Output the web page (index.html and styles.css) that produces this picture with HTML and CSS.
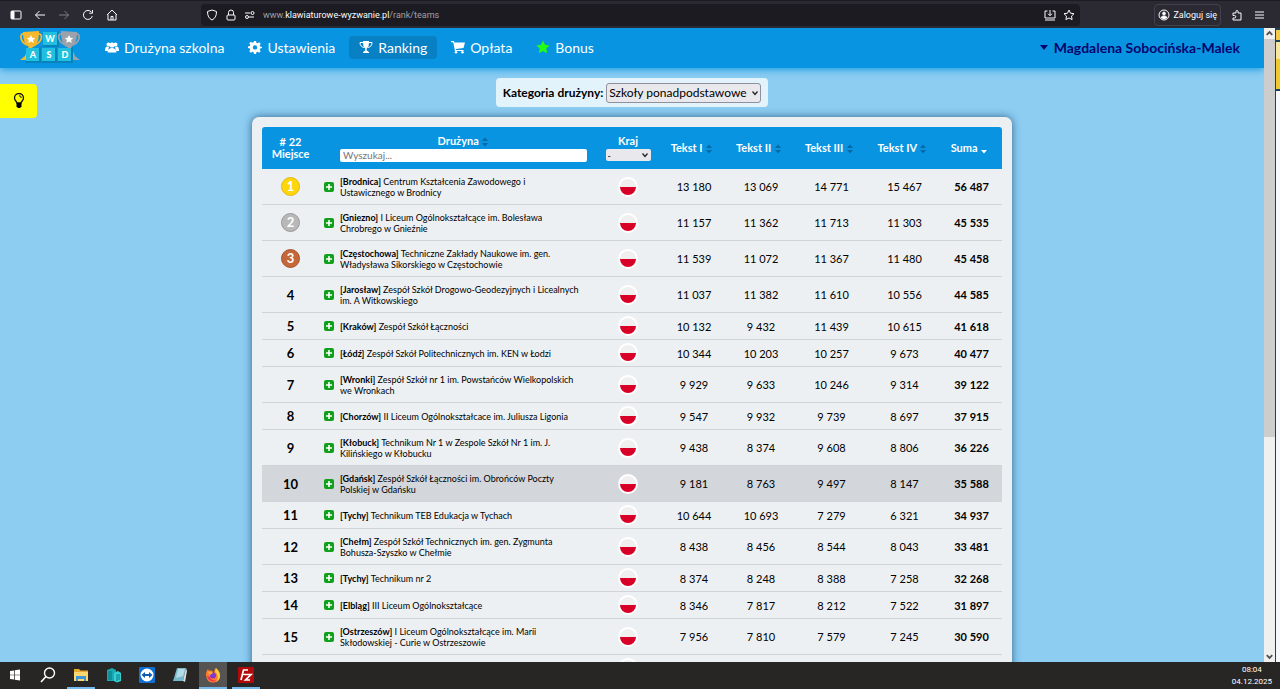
FILE: index.html
```html
<!DOCTYPE html>
<html lang="pl">
<head>
    <meta charset="UTF-8">
    <meta name="viewport" content="width=device-width, initial-scale=1.0">
    <title>Ranking drużyn</title>
    <link rel="stylesheet" href="styles.css">
</head>
<body>
    <svg width="0" height="0" class="sprites" aria-hidden="true">
        <symbol id="plus" viewBox="0 0 10 10"><rect width="10" height="10" rx="2" fill="#12a01c"/><path d="M5 2v6M2 5h6" stroke="#fff" stroke-width="1.6"/></symbol>
        <symbol id="sort" viewBox="0 0 8 10"><path d="M1 4l3-3.500L7 4zM1 6l3 3.500L7 6z" fill="#0668a5"/></symbol>
        <symbol id="chevron" viewBox="0 0 8 8"><path d="M1.500 2.500L4 5.500l2.500-3" fill="none" stroke="#222" stroke-width="1.300"/></symbol>
        <symbol id="star" viewBox="0 0 14 14"><path d="M7 .5l2 4.300 4.700.6-3.500 3.200.9 4.700L7 11l-4.100 2.300.9-4.700L.3 5.400 5 4.800z"/></symbol>
        <symbol id="cup" viewBox="0 0 24 34">
            <path d="M5 4C0 3 1 12 8 15M19 4c6-1 4 9-4 11" fill="none" stroke="currentColor" stroke-width="1.800"/>
            <path d="M4 2l16-1c0 9-2 15-6 16l-4 0C6 15 4 10 4 2z" fill="currentColor"/>
            <path d="M10 16h4l-4 10 2 4H1l5-4z" fill="currentColor"/>
            <path d="M12 5l1.300 2.700 3 .4-2.200 2 .6 3L12 11.600 9.300 13.100l.6-3-2.200-2 3-.4z" fill="#fff"/>
        </symbol>
    </svg>

    <div class="browser-bar">
        <div class="browser-nav">
            <button type="button" aria-label="Panel boczny"><svg viewBox="0 0 12 12"><rect x="1" y="2" width="10" height="8" rx="1"/><path d="M1.500 2.500h2.500v7H1.500z" fill="#fbfbfe"/></svg></button>
            <button type="button" aria-label="Wstecz"><svg viewBox="0 0 12 12"><path d="M11 6H1.500M5.500 2l-4 4 4 4"/></svg></button>
            <button type="button" aria-label="Dalej" class="off"><svg viewBox="0 0 12 12"><path d="M1 6h9.500M6.500 2l4 4-4 4"/></svg></button>
            <button type="button" aria-label="Odśwież"><svg viewBox="0 0 12 12"><path d="M10.300 7A4.500 4.500 0 1 1 9.500 3.200M10.500 1v3.200H7.300"/></svg></button>
            <button type="button" aria-label="Strona główna"><svg viewBox="0 0 12 12"><path d="M1 6l5-5 5 5M2 5.500V11h8V5.500M5 11V7.500h2V11"/></svg></button>
        </div>
        <div class="url-bar">
            <svg viewBox="0 0 12 12"><path d="M6 1l4.500 1.500C10.500 7 9 9.500 6 11 3 9.500 1.500 7 1.500 2.500z"/></svg>
            <svg viewBox="0 0 12 12"><rect x="2" y="6" width="8" height="5" rx="1"/><path d="M3.500 6V3.500a2.500 2.500 0 0 1 5 0V6"/></svg>
            <svg viewBox="0 0 12 12"><path d="M1 4h5M10 8H5"/><circle cx="8.500" cy="4" r="1.500"/><circle cx="3" cy="8" r="1.500"/></svg>
            <span class="url">www.<b>klawiaturowe-wyzwanie.pl</b>/rank/teams</span>
            <svg viewBox="0 0 12 12"><path d="M3.500 2H1v7h10V2H8.500M6 1v5.500M4 4.700l2 2 2-2M1 11h10"/></svg>
            <svg viewBox="0 0 12 12"><path d="M6 1l1.500 3.200 3.500.5-2.500 2.400.6 3.500L6 9l-3.100 1.600.6-3.500L1 4.700l3.500-.5z"/></svg>
        </div>
        <div class="browser-tools">
            <button type="button" class="login"><svg viewBox="0 0 12 12"><circle cx="6" cy="6" r="5"/><circle cx="6" cy="4.500" r="1.400" fill="#fbfbfe"/><path d="M3 8.500c1-2 5-2 6 0-1 1.500-5 1.500-6 0z" fill="#fbfbfe"/></svg>Zaloguj się</button>
            <button type="button" aria-label="Rozszerzenia"><svg viewBox="0 0 12 12"><path d="M2 4h3V2.500a1 1 0 0 1 2 0V4h3v7H2V9h1.500a1.200 1.200 0 0 0 0-2.500H2z"/></svg></button>
            <button type="button" aria-label="Menu"><svg viewBox="0 0 12 12"><path d="M2 3h9M2 6h9M2 9h9"/></svg></button>
        </div>
    </div>

    <div class="viewport">
        <div class="page">
            <header class="header">
                <a href="#" class="logo" aria-label="Strona główna">
                    <svg viewBox="0 0 62 34" width="62" height="34">
                        <path d="M24 2h14v13H24z" fill="#21bfe0"/>
                        <path d="M38 2l2-1v16H23l1-2h14z" fill="#0783ba"/>
                        <use href="#cup" x="0" y="0" width="24" height="34" color="#f5b82e"/>
                        <g color="#9ba2aa" transform="translate(62 0) scale(-1 1)"><use href="#cup" x="0" y="0" width="24" height="34"/></g>
                        <path d="M7 18h13v13H7zM23 18h13v13H23zM39 18h13v13H39z" fill="#21bfe0"/>
                        <path d="M20 18l2-1v16H6l1-2h13zM36 18l2-1v16H22l1-2h13zM52 18l2-1v16H38l1-2h13z" fill="#0783ba"/>
                        <g fill="#fff" font-family="Lato, sans-serif" font-size="9" font-weight="900" text-anchor="middle"><text x="31" y="12">W</text><text x="14" y="28">A</text><text x="30" y="28">S</text><text x="46" y="28">D</text></g>
                    </svg>
                </a>
                <nav class="menu">
                    <a href="#"><svg viewBox="0 0 14 14"><circle cx="3.500" cy="4.500" r="2"/><circle cx="10.500" cy="4.500" r="2"/><path d="M0 11c0-5 2-5 4-4L3 11zM14 11c0-5-2-5-4-4l1 4z"/><path d="M2.500 12.500c0-6 9-6 9 0z"/><circle cx="7" cy="5" r="2.600"/></svg>Drużyna szkolna</a>
                    <a href="#"><svg viewBox="0 0 14 14"><path fill-rule="evenodd" d="M6 1h2l.4 1.800 1.200.5 1.600-1 1.500 1.500-1 1.600.5 1.200L14 7v1l-1.800.4-.5 1.200 1 1.600-1.500 1.500-1.600-1-1.200.5L8 14H6l-.4-1.800-1.200-.5-1.600 1-1.500-1.500 1-1.600-.5-1.200L0 8V6.500l1.800-.4.5-1.200-1-1.600 1.500-1.500 1.600 1 1.200-.5zM7 5.200a2.200 2.200 0 1 0 0 4.400 2.200 2.200 0 0 0 0-4.400z"/></svg>Ustawienia</a>
                    <a href="#" class="active"><svg viewBox="0 0 14 14"><path d="M4 1h6c0 4-.5 6.500-2.300 7.500v2L10 12v1H4v-1l2.300-1.500v-2C4.500 7.500 4 5 4 1z"/><path d="M4 2.500H1c0 3 1.500 4.500 4 5M10 2.500h3c0 3-1.500 4.500-4 5" fill="none" stroke="#fff"/></svg>Ranking</a>
                    <a href="#"><svg viewBox="0 0 14 14"><path d="M0 1h3l.4 1.500H14L12.500 8 5 9v1h7.500v1H4L2.200 2.300H0z"/><circle cx="5" cy="12.300" r="1.300"/><circle cx="11.500" cy="12.300" r="1.300"/></svg>Opłata</a>
                    <a href="#" class="bonus"><svg viewBox="0 0 14 14"><use href="#star"/></svg>Bonus</a>
                </nav>
                <a href="#" class="user"><svg viewBox="0 0 8 5" width="8" height="5"><path d="M0 0h8L4 5z"/></svg>Magdalena Sobocińska-Malek</a>
            </header>

            <button type="button" class="hint" aria-label="Podpowiedź"><svg viewBox="0 0 12 16" width="12" height="16"><path d="M4 10C3.500 8 1.500 7.500 1.500 5a4.500 4.500 0 0 1 9 0c0 2.500-2 3-2.500 5z" fill="none" stroke="#111" stroke-width="1.300"/><path d="M6 2.800a2 2 0 0 1 2.200 2.200" fill="none" stroke="#111"/><path d="M3.500 10h5v3.500L7 15H5l-1.500-1.500z"/></svg></button>

            <main class="container">
                <div class="category">
                    <label for="category">Kategoria drużyny:</label>
                    <span class="select">
                        <select id="category"><option>Szkoły ponadpodstawowe</option></select>
                        <svg><use href="#chevron"/></svg>
                    </span>
                </div>

                <div class="card">
                    <table class="rank">
                        <colgroup>
                            <col class="c-place"><col class="c-plus"><col class="c-team"><col class="c-country"><col class="c-t1"><col class="c-t2"><col class="c-t3"><col class="c-t3"><col class="c-sum">
                        </colgroup>
                        <thead>
                            <tr>
                                <th># 22<br>Miejsce</th>
                                <th></th>
                                <th class="team-head">
                                    <label for="search">Drużyna <svg class="sort"><use href="#sort"/></svg></label>
                                    <input type="text" id="search" placeholder="Wyszukaj...">
                                </th>
                                <th>
                                    <label for="country">Kraj</label>
                                    <span class="select small">
                                        <select id="country"><option>-</option></select>
                                        <svg><use href="#chevron"/></svg>
                                    </span>
                                </th>
                                <th class="text-head">Tekst I <svg class="sort"><use href="#sort"/></svg></th>
                                <th class="text-head">Tekst II <svg class="sort"><use href="#sort"/></svg></th>
                                <th class="text-head">Tekst III <svg class="sort"><use href="#sort"/></svg></th>
                                <th class="text-head">Tekst IV <svg class="sort"><use href="#sort"/></svg></th>
                                <th class="text-head">Suma <svg class="sort" viewBox="0 0 8 10"><path d="M1 6h6L4 9.500z" fill="#fff"/></svg></th>
                            </tr>
                        </thead>
                        <tbody>
                            <tr class="tall"><td><span class="medal gold">1</span></td><td><svg class="plus"><use href="#plus"/></svg></td><td class="team"><b>[Brodnica]</b> Centrum Kształcenia Zawodowego i<br>Ustawicznego w Brodnicy</td><td><span class="flag"></span></td><td>13 180</td><td>13 069</td><td>14 771</td><td>15 467</td><td class="sum">56 487</td></tr>
                            <tr class="tall"><td><span class="medal silver">2</span></td><td><svg class="plus"><use href="#plus"/></svg></td><td class="team"><b>[Gniezno]</b> I Liceum Ogólnokształcące im. Bolesława<br>Chrobrego w Gnieźnie</td><td><span class="flag"></span></td><td>11 157</td><td>11 362</td><td>11 713</td><td>11 303</td><td class="sum">45 535</td></tr>
                            <tr class="tall"><td><span class="medal bronze">3</span></td><td><svg class="plus"><use href="#plus"/></svg></td><td class="team"><b>[Częstochowa]</b> Techniczne Zakłady Naukowe im. gen.<br>Władysława Sikorskiego w Częstochowie</td><td><span class="flag"></span></td><td>11 539</td><td>11 072</td><td>11 367</td><td>11 480</td><td class="sum">45 458</td></tr>
                            <tr class="tall"><td class="place">4</td><td><svg class="plus"><use href="#plus"/></svg></td><td class="team"><b>[Jarosław]</b> Zespół Szkół Drogowo-Geodezyjnych i Licealnych<br>im. A Witkowskiego</td><td><span class="flag"></span></td><td>11 037</td><td>11 382</td><td>11 610</td><td>10 556</td><td class="sum">44 585</td></tr>
                            <tr><td class="place">5</td><td><svg class="plus"><use href="#plus"/></svg></td><td class="team"><b>[Kraków]</b> Zespół Szkół Łączności</td><td><span class="flag"></span></td><td>10 132</td><td>9 432</td><td>11 439</td><td>10 615</td><td class="sum">41 618</td></tr>
                            <tr><td class="place">6</td><td><svg class="plus"><use href="#plus"/></svg></td><td class="team"><b>[Łódź]</b> Zespół Szkół Politechnicznych im. KEN w Łodzi</td><td><span class="flag"></span></td><td>10 344</td><td>10 203</td><td>10 257</td><td>9 673</td><td class="sum">40 477</td></tr>
                            <tr class="tall"><td class="place">7</td><td><svg class="plus"><use href="#plus"/></svg></td><td class="team"><b>[Wronki]</b> Zespół Szkół nr 1 im. Powstańców Wielkopolskich<br>we Wronkach</td><td><span class="flag"></span></td><td>9 929</td><td>9 633</td><td>10 246</td><td>9 314</td><td class="sum">39 122</td></tr>
                            <tr><td class="place">8</td><td><svg class="plus"><use href="#plus"/></svg></td><td class="team"><b>[Chorzów]</b> II Liceum Ogólnokształcace im. Juliusza Ligonia</td><td><span class="flag"></span></td><td>9 547</td><td>9 932</td><td>9 739</td><td>8 697</td><td class="sum">37 915</td></tr>
                            <tr class="tall"><td class="place">9</td><td><svg class="plus"><use href="#plus"/></svg></td><td class="team"><b>[Kłobuck]</b> Technikum Nr 1 w Zespole Szkół Nr 1 im. J.<br>Kilińskiego w Kłobucku</td><td><span class="flag"></span></td><td>9 438</td><td>8 374</td><td>9 608</td><td>8 806</td><td class="sum">36 226</td></tr>
                            <tr class="tall own"><td class="place">10</td><td><svg class="plus"><use href="#plus"/></svg></td><td class="team"><b>[Gdańsk]</b> Zespół Szkół Łączności im. Obrońców Poczty<br>Polskiej w Gdańsku</td><td><span class="flag"></span></td><td>9 181</td><td>8 763</td><td>9 497</td><td>8 147</td><td class="sum">35 588</td></tr>
                            <tr><td class="place">11</td><td><svg class="plus"><use href="#plus"/></svg></td><td class="team"><b>[Tychy]</b> Technikum TEB Edukacja w Tychach</td><td><span class="flag"></span></td><td>10 644</td><td>10 693</td><td>7 279</td><td>6 321</td><td class="sum">34 937</td></tr>
                            <tr class="tall"><td class="place">12</td><td><svg class="plus"><use href="#plus"/></svg></td><td class="team"><b>[Chełm]</b> Zespół Szkół Technicznych im. gen. Zygmunta<br>Bohusza-Szyszko w Chełmie</td><td><span class="flag"></span></td><td>8 438</td><td>8 456</td><td>8 544</td><td>8 043</td><td class="sum">33 481</td></tr>
                            <tr><td class="place">13</td><td><svg class="plus"><use href="#plus"/></svg></td><td class="team"><b>[Tychy]</b> Technikum nr 2</td><td><span class="flag"></span></td><td>8 374</td><td>8 248</td><td>8 388</td><td>7 258</td><td class="sum">32 268</td></tr>
                            <tr><td class="place">14</td><td><svg class="plus"><use href="#plus"/></svg></td><td class="team"><b>[Elbląg]</b> III Liceum Ogólnokształcące</td><td><span class="flag"></span></td><td>8 346</td><td>7 817</td><td>8 212</td><td>7 522</td><td class="sum">31 897</td></tr>
                            <tr class="tall"><td class="place">15</td><td><svg class="plus"><use href="#plus"/></svg></td><td class="team"><b>[Ostrzeszów]</b> I Liceum Ogólnokształcące im. Marii<br>Skłodowskiej - Curie w Ostrzeszowie</td><td><span class="flag"></span></td><td>7 956</td><td>7 810</td><td>7 579</td><td>7 245</td><td class="sum">30 590</td></tr>
                            <tr><td></td><td></td><td></td><td><span class="flag"></span></td><td></td><td></td><td></td><td></td><td></td></tr>
                        </tbody>
                    </table>
                </div>
            </main>
        </div>
        <div class="scrollbar">
            <svg viewBox="0 0 12 12"><path d="M3 7.500l3-3 3 3"/></svg>
            <div class="thumb"></div>
            <div class="track"></div>
            <svg viewBox="0 0 12 12"><path d="M3 4.500l3 3 3-3"/></svg>
        </div>
        <div class="side-window"><i class="tab"></i><i class="tab big"></i><i class="pane"></i></div>
    </div>

    <footer class="taskbar">
        <div class="apps">
            <button type="button" aria-label="Start"><svg viewBox="0 0 16 16"><path d="M3 4l4-.6V7.700H3zM7.700 3.300L13 2.500v5.200H7.700zM3 8.300h4v4.300L3 12zM7.700 8.300H13v5.200l-5.300-.8z" fill="#fff"/></svg></button>
            <button type="button" aria-label="Szukaj"><svg viewBox="0 0 16 16"><circle cx="9.500" cy="6" r="5" fill="none" stroke="#fff" stroke-width="1.400"/><path d="M6 9.500L1 15" stroke="#fff" stroke-width="1.600"/></svg></button>
            <button type="button" aria-label="Eksplorator" class="open"><svg viewBox="0 0 16 16"><path d="M1 2h5l1.500 1.500H15V14H1z" fill="#e9a92d"/><path d="M1 5h14v9H1z" fill="#fcd770"/><path d="M3 9h10v5h-2v-2H5v2H3z" fill="#3d94d8"/></svg></button>
            <button type="button" aria-label="Serwer"><svg viewBox="0 0 16 16"><path d="M1 3l5-2 4 2v11H1z" fill="#18a9b5"/><path d="M8 6l4-2 3 2v8l-4 1.500L8 14z" fill="#35d0d6"/><path d="M3 4v9M5 4v9M11 7v7M13 7v6" stroke="#087681"/></svg></button>
            <button type="button" aria-label="Zdalny pulpit"><svg viewBox="0 0 16 16"><rect width="16" height="16" rx="1" fill="#0d6fd0"/><circle cx="8" cy="8" r="6.500" fill="#fff"/><path d="M2.500 8L6 5v2h4V5l3.500 3L10 11V9H6v2z" fill="#0d5cb5"/></svg></button>
            <button type="button" aria-label="Notatnik"><svg viewBox="0 0 16 16"><path d="M5 1h9l-3 13H1z" fill="#76b9cd"/><path d="M6 2h7l-2 7-7 2z" fill="#b5dce6"/><path d="M14 1l1 3-2 11-2-1z" fill="#ddd"/></svg></button>
            <button type="button" aria-label="Firefox" class="open current"><svg viewBox="0 0 16 16"><path d="M1 7c0-2 1-4 2-5l1 2c2-1 3 0 4 0-1 1 0 2 1 2 0-2 1-4 1-5 3 2 5 4 5 8 0 4-3 6.500-7 6.500S1 13 1 7z" fill="#ff7a2c"/><path d="M11 1c2 2 4 4 4 8 0 3-2 5-4 6 3-4 2-8-1-10z" fill="#ffce3c"/><path d="M2 9c1 5 6 7 10 4-4 1-6 0-7-3z" fill="#ed315c"/><circle cx="8" cy="8.500" r="3" fill="#7c3ad1"/><path d="M3 5c2-1 4 0 5 1-1 1-2 1-3 2z" fill="#ffad35"/></svg></button>
            <button type="button" aria-label="FileZilla" class="open"><svg viewBox="0 0 16 16"><rect width="16" height="16" rx="1" fill="#b10a0a"/><path d="M3 13L5.500 3H10M4 7.500h4.500M8.500 7.500H13L7.500 13H12" fill="none" stroke="#fff" stroke-width="1.700"/></svg></button>
        </div>
        <div class="clock">08:04<br>04.12.2025</div>
    </footer>
</body>
</html>
```

FILE: styles.css
```css
* {
    box-sizing: border-box;
}
body {
    margin: 0;
    height: 100vh;
    display: flex;
    flex-direction: column;
    overflow: hidden;
    font-family: Lato, sans-serif;
    font-size: 11px;
    color: #000;
}
button {
    border: 0;
    padding: 0;
    background: none;
    font-family: inherit;
    cursor: pointer;
}
a {
    text-decoration: none;
}
.sprites {
    position: absolute;
}

/* pasek przeglądarki */
.browser-bar {
    display: flex;
    align-items: center;
    height: 28px;
    flex: none;
    padding: 0 15px 0 10px;
    background-color: #2b2a33;
    border-top: 1px solid #1c1b22;
    font-family: Roboto, "Noto Sans", sans-serif;
    color: #fbfbfe;
}
.browser-bar svg {
    width: 12px;
    height: 12px;
    flex: none;
    fill: none;
    stroke: #fbfbfe;
    stroke-width: 1;
}
.browser-nav {
    display: flex;
    gap: 12px;
    width: 191px;
}
.browser-nav button {
    width: 12px;
    height: 12px;
    display: flex;
}
.browser-nav .off {
    opacity: 0.4;
}
.url-bar {
    display: flex;
    align-items: center;
    gap: 7px;
    height: 22px;
    flex: 1;
    padding: 0 5px;
    border-radius: 4px;
    background-color: #1c1b22;
}
.url {
    flex: 1;
    font-size: 9px;
    color: #a0a0a8;
}
.url b {
    font-weight: normal;
    color: #fbfbfe;
}
.browser-tools {
    display: flex;
    align-items: center;
    gap: 10px;
    margin-left: 74px;
}
.browser-tools button {
    display: flex;
    align-items: center;
}
.browser-tools .login {
    height: 22px;
    gap: 3px;
    padding: 0 3px;
    border: 1px solid #42414d;
    border-radius: 4px;
    font-size: 9px;
    color: #fbfbfe;
}

/* strona */
.viewport {
    display: flex;
    flex: 1;
    min-height: 0;
}
.page {
    position: relative;
    flex: 1;
    overflow: hidden;
    background-color: #8dcdf2;
}
.header {
    display: flex;
    align-items: center;
    height: 40px;
    padding: 0 24px 2px 19px;
    background-color: #0894e1;
    box-shadow: 0 1px 8px #0894e1;
}
.logo {
    display: flex;
    margin-right: 14px;
}
.menu {
    display: flex;
    gap: 4px;
    flex: 1;
}
.menu a {
    display: flex;
    align-items: center;
    gap: 5px;
    height: 23px;
    padding: 0 10px;
    border-radius: 4px;
    font-size: 14px;
    color: #fff;
}
.menu svg {
    width: 14px;
    height: 14px;
    fill: #fff;
}
.menu .active {
    background-color: #0780c4;
}
.menu .bonus svg {
    fill: #22ff11;
}
.user {
    display: flex;
    align-items: center;
    gap: 6px;
    font-size: 14px;
    font-weight: bold;
    color: #04046e;
}
.user svg {
    fill: #04046e;
}
.hint {
    position: absolute;
    left: 0;
    top: 56px;
    display: flex;
    align-items: center;
    justify-content: center;
    width: 37px;
    height: 34px;
    border-radius: 0 4px 4px 0;
    background-color: #ff0;
}
.container {
    display: flex;
    flex-direction: column;
    align-items: center;
    gap: 10px;
    padding-top: 10px;
}
.category {
    display: flex;
    align-items: center;
    gap: 3px;
    height: 29px;
    padding: 0 7px;
    border-radius: 4px;
    background-color: #e3f3fc;
    font-size: 12px;
}
.category label {
    font-weight: bold;
}
.select {
    position: relative;
    display: block;
}
.select svg {
    position: absolute;
    right: 2px;
    top: 50%;
    width: 8px;
    height: 8px;
    margin-top: -4px;
    pointer-events: none;
}
select {
    display: block;
    height: 20px;
    width: 155px;
    padding: 0 2px;
    border: 1px solid #8f8f9d;
    border-radius: 3px;
    background-color: #e9e9ed;
    appearance: none;
    font-family: inherit;
    font-size: 12px;
    color: #000;
}
.small {
    width: 45px;
    margin: 0 auto;
}
.small select {
    width: 100%;
    height: 12px;
    border: 0;
    border-radius: 2px;
    font-size: 9px;
}

/* ranking */
.card {
    width: 760px;
    max-width: 100%;
    padding: 10px;
    border-radius: 7px;
    background-color: #edf0f3;
    box-shadow: 0 0 9px #33638c;
}
.rank {
    width: 100%;
    table-layout: fixed;
    border-collapse: separate;
    border-spacing: 0;
}
.c-place {
    width: 57px;
}
.c-plus {
    width: 19px;
}
.c-team {
    width: 257px;
}
.c-country,
.c-t1 {
    width: 66px;
}
.c-t2 {
    width: 68px;
}
.c-t3 {
    width: 73px;
}
.c-sum {
    width: 61px;
}
.rank th {
    height: 42px;
    padding: 0;
    background-color: #0894e1;
    color: #fff;
    font-size: 11px;
    line-height: 12px;
}
.rank th:first-child {
    border-top-left-radius: 3px;
}
.rank th:last-child {
    border-top-right-radius: 3px;
}
.rank th label {
    display: block;
    margin-bottom: 2px;
}
.rank .text-head {
    padding-right: 4px;
}
.rank .team-head {
    padding: 0 8px 0 2px;
}
.team-head input {
    display: block;
    width: 100%;
    height: 13px;
    padding: 0 3px;
    border: 0;
    border-radius: 2px;
    font-family: inherit;
    font-size: 10px;
}
.sort {
    width: 8px;
    height: 10px;
    vertical-align: -2px;
}
.rank td {
    height: 27px;
    padding: 0;
    border-bottom: 1px solid #d0d4d8;
    font-size: 11px;
    text-align: center;
}
.rank .tall td {
    height: 36px;
}
.rank .own td {
    background-color: #d3d7dc;
}
.rank .place {
    font-size: 13px;
    font-weight: bold;
}
.rank .team {
    padding: 0 8px 0 2px;
    font-size: 9px;
    line-height: 11px;
    text-align: left;
    white-space: nowrap;
}
.rank .sum {
    font-weight: bold;
}
.plus {
    display: block;
    width: 10px;
    height: 10px;
    margin: 0 auto;
}
.medal {
    display: block;
    width: 19px;
    height: 19px;
    margin: 0 auto;
    border-radius: 50%;
    font-size: 13px;
    font-weight: bold;
    line-height: 17px;
    color: #fff;
}
.gold {
    background-color: #fdd60b;
    border: 1px solid #e3b90c;
}
.silver {
    background-color: #b8b8b8;
    border: 1px solid #999;
}
.bronze {
    background-color: #c4673a;
    border: 1px solid #a9532b;
}
.flag {
    display: block;
    width: 20px;
    height: 20px;
    margin: 0 auto;
    border: 2px solid #fff;
    border-radius: 50%;
    background: linear-gradient(#f0f0f0 50%, #d80027 50%);
}

/* pasek przewijania i okno obok */
.scrollbar {
    display: flex;
    flex-direction: column;
    width: 11px;
    background-color: #f0f0f0;
}
.scrollbar svg {
    width: 11px;
    height: 11px;
    fill: none;
    stroke: #505050;
    stroke-width: 2;
}
.thumb {
    flex: 65;
    background-color: #cdcdcd;
}
.track {
    flex: 35;
}
.side-window {
    display: flex;
    flex-direction: column;
    gap: 2px;
    width: 5px;
    padding: 2px 0 0 1px;
    background-color: #1d4255;
}
.side-window .tab {
    height: 10px;
    background-color: #f5c94a;
}
.side-window .big {
    height: 47px;
    background: linear-gradient(#f7e6a0 35%, #f0c92c 36%);
}
.side-window .pane {
    flex: 1;
    background-color: #f5f8fc;
}

/* pasek zadań */
.taskbar {
    display: flex;
    justify-content: space-between;
    height: 27px;
    flex: none;
    padding-right: 8px;
    background-color: #272624;
}
.apps {
    display: flex;
    gap: 5px;
    padding-left: 1px;
}
.apps button {
    display: flex;
    align-items: center;
    justify-content: center;
    width: 28px;
    border-bottom: 2px solid transparent;
}
.apps svg {
    width: 16px;
    height: 16px;
}
.apps .open {
    border-bottom-color: #76b9ed;
}
.apps .current {
    background-color: #555452;
}
.clock {
    font-family: Roboto, sans-serif;
    font-size: 8px;
    line-height: 12px;
    padding-top: 2px;
    color: #fff;
    text-align: center;
}
```
